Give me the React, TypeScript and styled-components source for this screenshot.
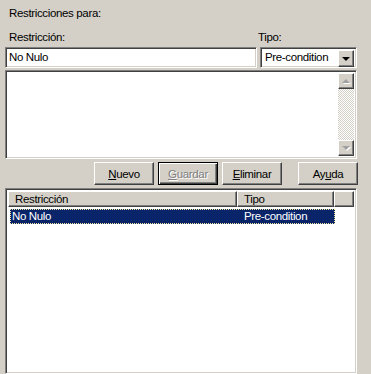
import React from "react";
import styled, { createGlobalStyle } from "styled-components";

const GlobalStyle = createGlobalStyle`
  html, body {
    margin: 0;
    padding: 0;
    background: #d4d0c8;
  }
  body {
    font-family: "Liberation Sans", Arial, sans-serif;
    font-size: 11.5px;
    letter-spacing: -0.35px;
    color: #000;
  }
`;

const Panel = styled.div`
  width: 371px;
  height: 374px;
  overflow: hidden;
  box-sizing: border-box;
  padding: 7px 14px 0 5px;
  display: flex;
  flex-direction: column;
`;

const Caption = styled.div`
  padding-left: 4px;
  line-height: 13px;
  height: 13px;
`;

const FieldGrid = styled.div`
  margin-top: 11px;
  display: grid;
  grid-template-columns: 252px 97px;
  column-gap: 3px;
  row-gap: 3px;
`;

const Label = styled.div<{ $shift?: number }>`
  padding-left: 4px;
  margin-left: ${({ $shift }) => $shift ?? 0}px;
  line-height: 13px;
  height: 13px;
`;

const sunken = `
  box-sizing: border-box;
  background: #fff;
  border-top: 1px solid #808080;
  border-left: 1px solid #808080;
  border-bottom: 1px solid #fff;
  border-right: 1px solid #fff;
  box-shadow: inset 1px 1px 0 #404040, inset -1px -1px 0 #d4d0c8;
`;

const raised = `
  box-sizing: border-box;
  background: #d4d0c8;
  border-top: 1px solid #fff;
  border-left: 1px solid #fff;
  border-bottom: 1px solid #404040;
  border-right: 1px solid #404040;
  box-shadow: inset -1px -1px 0 #808080, inset 1px 1px 0 #d4d0c8;
`;

const TextBox = styled.div`
  ${sunken}
  height: 21px;
  padding: 3px 0 0 3px;
  line-height: 13px;
`;

const Combo = styled.div`
  ${sunken}
  height: 21px;
  display: flex;
  padding: 2px;
`;

const ComboText = styled.div`
  flex: 1;
  padding: 1px 0 0 2px;
  line-height: 13px;
`;

const ArrowButton = styled.div<{ $height?: number }>`
  ${raised}
  width: 16px;
  height: ${({ $height }) => $height ?? 17}px;
  display: flex;
  align-items: center;
  justify-content: center;
`;

const Triangle = styled.div<{ $up?: boolean; $color: string }>`
  width: 0;
  height: 0;
  border-left: 4px solid transparent;
  border-right: 4px solid transparent;
  ${({ $up, $color }) =>
    $up
      ? `border-bottom: 4px solid ${$color};`
      : `border-top: 4px solid ${$color};`}
  filter: ${({ $color }) =>
    $color === "#000" ? "none" : "drop-shadow(1px 1px 0 #fff)"};
`;

const Memo = styled.div`
  ${sunken}
  margin-top: 2px;
  width: 352px;
  height: 89px;
  display: flex;
  justify-content: flex-end;
  padding: 2px;
`;

const ScrollBar = styled.div`
  width: 16px;
  display: flex;
  flex-direction: column;
  justify-content: space-between;
  background-color: #fff;
  background-image: repeating-conic-gradient(#d4d0c8 0 25%, #fff 0 50%);
  background-size: 2px 2px;
`;

const ButtonRow = styled.div`
  margin-top: 3px;
  width: 353px;
  display: flex;
  justify-content: flex-end;
  gap: 4px;
`;

const Button = styled.div<{ $default?: boolean; $disabled?: boolean; $spaced?: boolean }>`
  ${raised}
  width: 60px;
  height: 23px;
  display: flex;
  align-items: center;
  justify-content: center;
  margin-left: ${({ $spaced }) => ($spaced ? "12px" : "0")};
  color: ${({ $disabled }) => ($disabled ? "#808080" : "#000")};
  text-shadow: ${({ $disabled }) => ($disabled ? "1px 1px 0 #fff" : "none")};
  ${({ $default }) =>
    $default
      ? `border-color: #000; box-shadow: inset 1px 1px 0 #fff, inset -1px -1px 0 #404040, inset -2px -2px 0 #808080;`
      : ""}
`;

const Key = styled.span`
  text-decoration: underline;
`;

const ListView = styled.div`
  ${sunken}
  margin-top: 3px;
  width: 352px;
  flex: 1;
  padding: 2px;
  display: flex;
  flex-direction: column;
`;

const HeaderRow = styled.div`
  display: flex;
  height: 16px;
`;

const HeaderCell = styled.div<{ $width?: number }>`
  ${raised}
  ${({ $width }) => ($width ? `width: ${$width}px;` : "flex: 1;")}
  height: 16px;
  padding: 1px 0 0 6px;
  line-height: 13px;
`;

const ItemRow = styled.div`
  display: flex;
  margin-top: 2px;
  margin-left: 2px;
  width: 325px;
  height: 15px;
  box-sizing: border-box;
  background: #0a246a;
  color: #fff;
  border: 1px dotted #f0e8a0;
  line-height: 13px;
`;

const ItemCell = styled.div<{ $width?: number }>`
  ${({ $width }) => ($width ? `width: ${$width}px;` : "flex: 1;")}
  padding-left: 1px;
  box-sizing: border-box;
`;

const App = () => (
  <>
    <GlobalStyle />
    <Panel>
      <Caption>Restricciones para:</Caption>
      <FieldGrid>
        <Label>Restricción:</Label>
        <Label $shift={-6}>Tipo:</Label>
        <TextBox>No Nulo</TextBox>
        <Combo>
          <ComboText>Pre-condition</ComboText>
          <ArrowButton>
            <Triangle $color="#000" />
          </ArrowButton>
        </Combo>
      </FieldGrid>
      <Memo>
        <ScrollBar>
          <ArrowButton $height={16}>
            <Triangle $up $color="#a0a0a0" />
          </ArrowButton>
          <ArrowButton $height={16}>
            <Triangle $color="#a0a0a0" />
          </ArrowButton>
        </ScrollBar>
      </Memo>
      <ButtonRow>
        <Button>
          <Key>N</Key>uevo
        </Button>
        <Button $default $disabled>
          <Key>G</Key>uardar
        </Button>
        <Button>
          <Key>E</Key>liminar
        </Button>
        <Button $spaced>
          Ay<Key>u</Key>da
        </Button>
      </ButtonRow>
      <ListView>
        <HeaderRow>
          <HeaderCell $width={229}>Restricción</HeaderCell>
          <HeaderCell $width={97}>Tipo</HeaderCell>
          <HeaderCell />
        </HeaderRow>
        <ItemRow>
          <ItemCell $width={232}>No Nulo</ItemCell>
          <ItemCell>Pre-condition</ItemCell>
        </ItemRow>
      </ListView>
    </Panel>
  </>
);

export default App;
